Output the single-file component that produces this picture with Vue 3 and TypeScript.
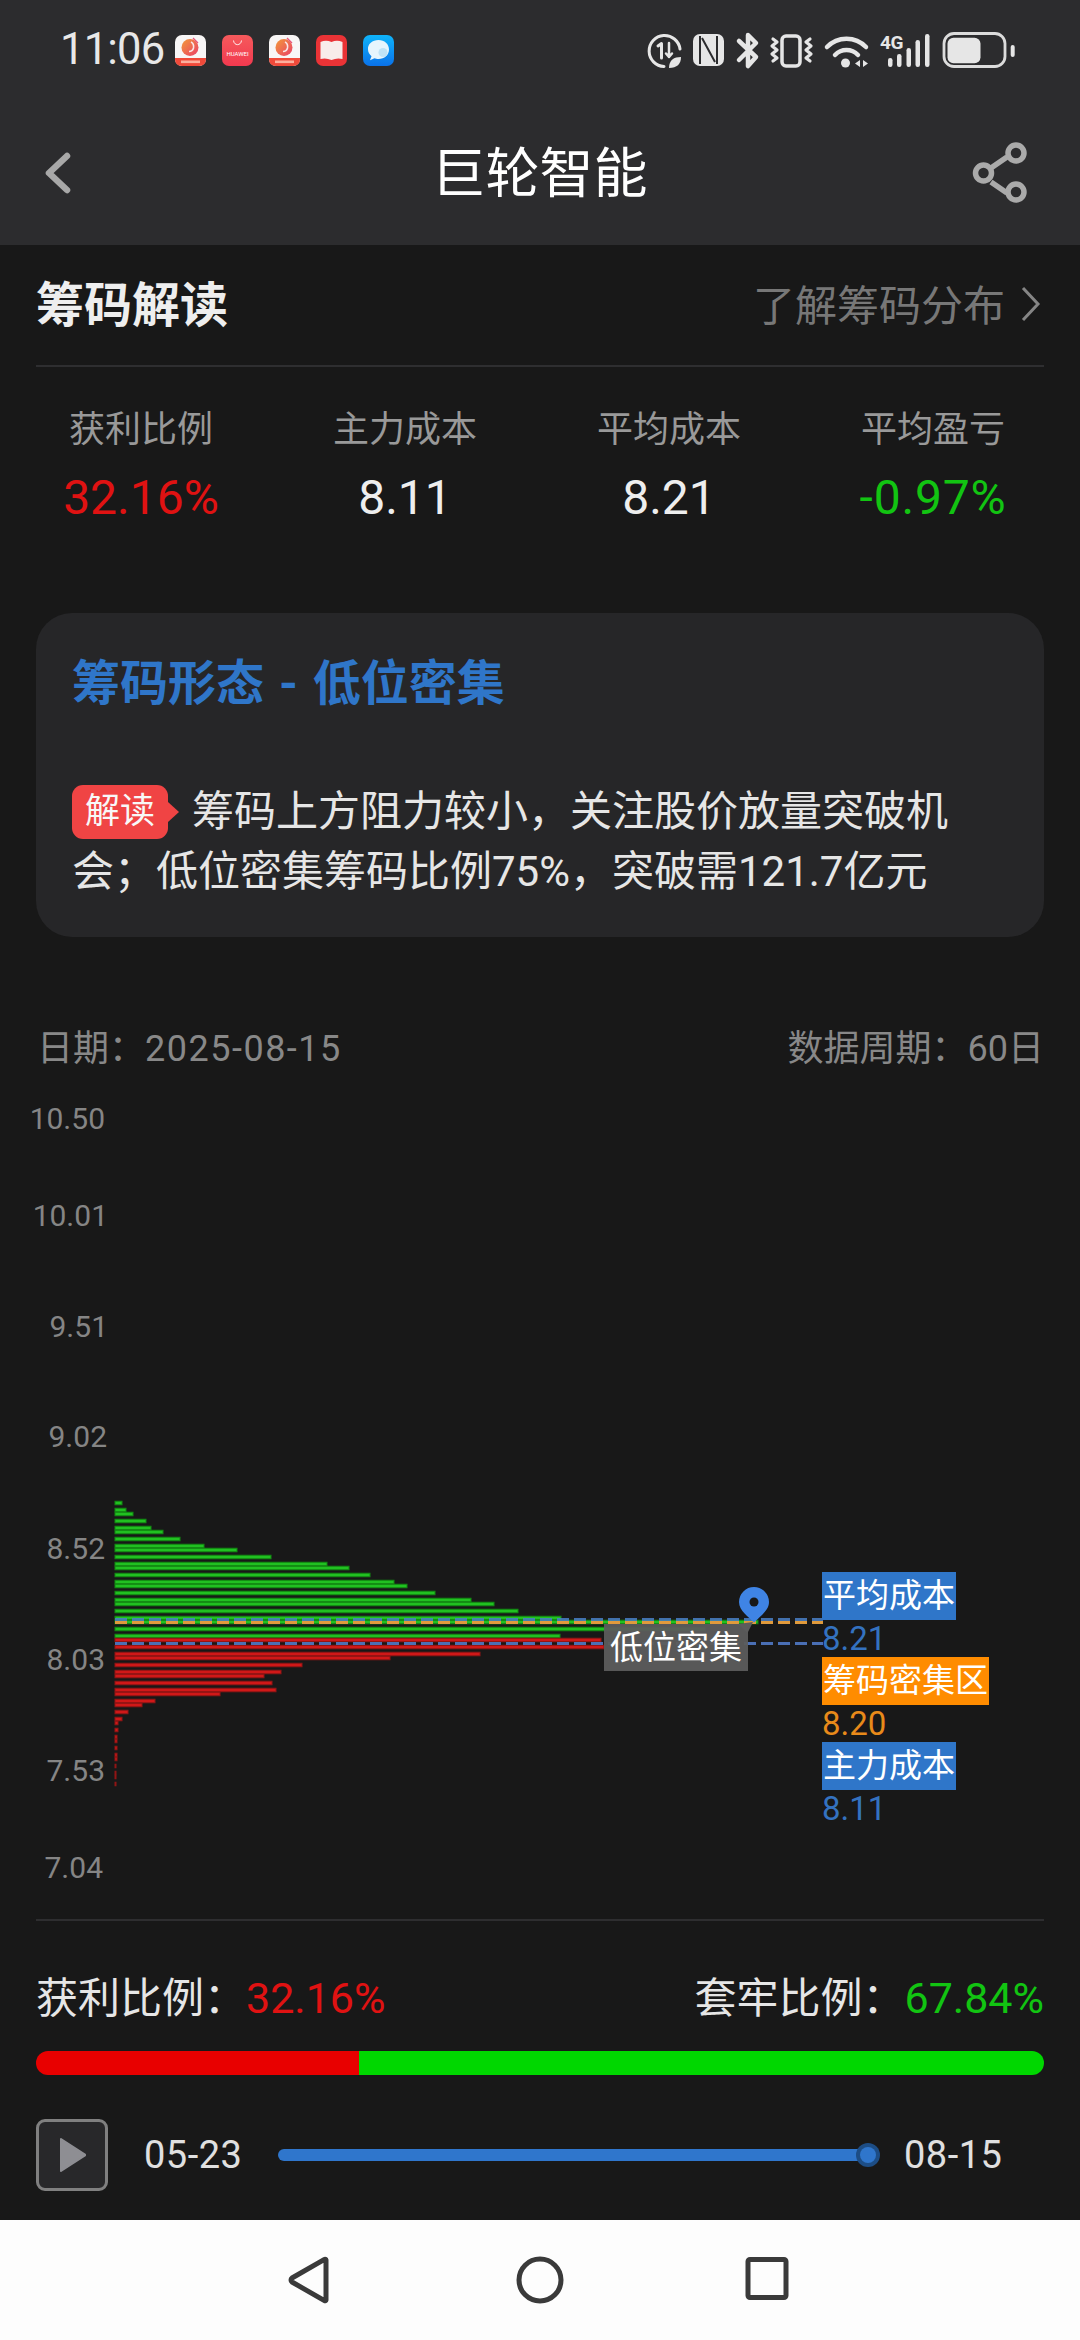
<script setup lang="ts">
const stats = [
  { label: '获利比例', value: '32.16%', tone: 'red' },
  { label: '主力成本', value: '8.11', tone: '' },
  { label: '平均成本', value: '8.21', tone: '' },
  { label: '平均盈亏', value: '-0.97%', tone: 'green' },
]
const axis: { t: string; y: number; r: number }[] = [
  { t: '10.50', y: 1119, r: 975 },
  { t: '10.01', y: 1216, r: 972 },
  { t: '9.51', y: 1327, r: 972 },
  { t: '9.02', y: 1437, r: 973 },
  { t: '8.52', y: 1549, r: 975 },
  { t: '8.03', y: 1660, r: 975 },
  { t: '7.53', y: 1771, r: 975 },
  { t: '7.04', y: 1868, r: 977 },
]
const top = 1080
const green: [number, number][] = [
  [1503, 7], [1510, 11], [1514, 18], [1521, 31], [1528, 36], [1532, 48], [1539, 65], [1546, 89],
  [1550, 122], [1557, 156], [1564, 212], [1568, 234], [1575, 255], [1582, 279], [1586, 292],
  [1593, 320], [1600, 356], [1604, 379], [1611, 403], [1618, 446], [1622, 643], [1629, 590], [1636, 445],
]
const red: [number, number][] = [
  [1640, 486], [1647, 489], [1654, 365], [1658, 275], [1665, 187], [1672, 166], [1676, 149], [1683, 157],
  [1690, 161], [1694, 105], [1701, 40], [1705, 27], [1712, 13], [1719, 7], [1723, 3], [1730, 3],
  [1737, 2], [1741, 2], [1748, 2], [1755, 2], [1759, 2], [1766, 1], [1773, 1], [1777, 1], [1784, 1],
]
const marks = [
  { name: '平均成本', value: '8.21', tone: 'blue' },
  { name: '筹码密集区', value: '8.20', tone: 'orange' },
  { name: '主力成本', value: '8.11', tone: 'blue' },
]
const appIcons = [0, 1, 2, 3, 4]
</script>

<template>
  <div class="page">
    <header class="top">
      <div class="status">
        <span class="time">11:06</span>
        <div class="apps">
          <svg v-for="i in appIcons" :key="i" class="app" viewBox="0 0 31 31" width="31" height="31">
            <defs>
              <linearGradient :id="'ball' + i" x1="0" y1="0" x2="1" y2="1">
                <stop offset="0" stop-color="#f29a3a" />
                <stop offset="1" stop-color="#ea3f68" />
              </linearGradient>
              <linearGradient :id="'hw' + i" x1="0" y1="0" x2="0" y2="1">
                <stop offset="0" stop-color="#f55a5c" />
                <stop offset="1" stop-color="#f2394f" />
              </linearGradient>
              <linearGradient :id="'msg' + i" x1="0" y1="0" x2="0" y2="1">
                <stop offset="0" stop-color="#0fb4fa" />
                <stop offset="1" stop-color="#0a72ea" />
              </linearGradient>
            </defs>
            <g v-if="i === 0 || i === 2">
              <rect width="31" height="31" rx="7" fill="#f8f6f6" />
              <circle cx="15" cy="12.500" r="8.500" :fill="`url(#ball${i})`" />
              <path d="M16 7c2 1 3 3 2.500 6c-.5 2-2 3.500-4.500 3.500" fill="none" stroke="#f8e6e6" stroke-width="1.600" />
              <path d="M18 3l5 5" stroke="#e8557a" stroke-width="1.300" />
              <path d="M0 23h31v1q0 7-7 7H7q-7 0-7-7z" fill="#f04a3a" />
              <rect x="6" y="25.500" width="19" height="2.600" fill="#ffc9b8" opacity=".8" />
            </g>
            <g v-else-if="i === 1">
              <rect width="31" height="31" rx="7" :fill="`url(#hw${i})`" />
              <path d="M11.500 5.500c.5 5.500 7.500 5.500 8 0" fill="none" stroke="#fff" stroke-width=".9" />
              <text x="15.500" y="20.500" class="hw">HUAWEI</text>
            </g>
            <g v-else-if="i === 3">
              <rect width="31" height="31" rx="7" fill="#ea3336" />
              <path d="M4.500 7q5.500-2.500 11 0q5.500-2.500 11 0v17q-5.500-1.500-11 1q-5.500-2.500-11-1z" fill="#f8ecea" />
            </g>
            <g v-else>
              <rect width="31" height="31" rx="7" :fill="`url(#msg${i})`" />
              <path d="M15.500 5c6 0 10.500 4 10.500 9.500s-4.500 9.500-10.500 9.500c-1.500 0-3-.3-4-.8l-4.500 2l1.500-4c-2-1.700-3.500-4-3.500-6.700C4.500 9 9.500 5 15.500 5z" fill="#e6f5fd" />
              <circle cx="20" cy="17.500" r="4.500" fill="#bfe3f6" />
            </g>
          </svg>
        </div>
        <svg class="sys" viewBox="0 0 380 50" width="380" height="50">
          <g fill="none" stroke="#e6e6e6" stroke-linecap="round" stroke-linejoin="round">
            <path d="M40 24A15.500 15.500 0 1 0 24 41.500" stroke-width="3" />
            <path d="M18 21l3.500-2.500V33" stroke-width="3" />
            <path d="M29 18v14M26 28.500l3 3.500l3-3.500" stroke-width="2.500" />
            <path d="M99 16l17 16l-8 9V10l8 8l-17 17" stroke-width="4.500" />
            <rect x="142" y="11" width="18" height="30" rx="4" stroke-width="3.500" />
            <path d="M133 14l4 3l-5 4l5 4l-5 4l5 4l-4 3" stroke-width="3.200" />
            <path d="M170 14l-4 3l5 4l-5 4l5 4l-5 4l4 3" stroke-width="3.200" />
            <path d="M187 22A27 27 0 0 1 226 22" stroke-width="4.500" />
            <path d="M195 30A16 16 0 0 1 218 30" stroke-width="4.500" />
            <rect x="304" y="8.500" width="61" height="33" rx="10" stroke-width="2.800" stroke="#dcdcdc" />
          </g>
          <g fill="#e6e6e6">
            <path d="M29 43C29 35 34 32 41 32C41 39 37 43 29 43Z" />
            <rect x="53" y="9" width="31" height="32" rx="7" />
            <circle cx="205.500" cy="38" r="4.500" />
            <path d="M215 38.500l5-3.500v7zM223 35l5 3.500l-5 3.500z" />
            <text x="240" y="24" class="fourg">4G</text>
            <rect x="248" y="33" width="4.500" height="9" rx="2.200" />
            <rect x="257" y="29" width="4.500" height="13" rx="2.200" />
            <rect x="266.500" y="23" width="4.500" height="19" rx="2.200" />
            <rect x="275.500" y="15" width="4.500" height="27" rx="2.200" />
            <rect x="285" y="9" width="4.500" height="33" rx="2.200" />
            <rect x="307.500" y="12.700" width="33" height="25.500" rx="6" />
            <rect x="370.700" y="20" width="4" height="12" rx="2" />
          </g>
          <path d="M60 11V39M77 11V39M62 13L75 37" fill="none" stroke="#2c2c2e" stroke-width="2" />
        </svg>
      </div>
      <nav class="bar">
        <svg class="back" viewBox="0 0 30 46" width="30" height="46">
          <path d="M25 6L7 23l18 17" fill="none" stroke="#a8a8a8" stroke-width="6.500" stroke-linecap="round" stroke-linejoin="round" />
        </svg>
        <h1 class="title">巨轮智能</h1>
        <svg class="share" viewBox="0 0 60 66" width="60" height="66">
          <g fill="none" stroke="#aaa" stroke-width="5.500">
            <path d="M21 26L37 15M21 40L37 51" />
            <circle cx="46" cy="11" r="8" />
            <circle cx="13.500" cy="31" r="8" />
            <circle cx="46" cy="50" r="8" />
          </g>
        </svg>
      </nav>
    </header>

    <main class="main">
      <div class="head">
        <h2 class="head-title">筹码解读</h2>
        <div class="more">
          <span>了解筹码分布</span>
          <svg viewBox="0 0 20 36" width="20" height="36">
            <path d="M2 2l15 16L2 34" fill="none" stroke="#858585" stroke-width="3" />
          </svg>
        </div>
      </div>

      <div class="stats">
        <div v-for="s in stats" :key="s.label" class="stat">
          <div class="stat-label">{{ s.label }}</div>
          <div class="stat-value" :class="s.tone">{{ s.value }}</div>
        </div>
      </div>

      <section class="card">
        <h3 class="card-title">筹码形态 - 低位密集</h3>
        <p class="card-text"><span class="badge">解读</span>筹码上方阻力较小，关注股价放量突破机会；低位密集筹码比例75%，突破需121.7亿元</p>
      </section>

      <div class="meta">
        <span>日期：<span class="num">2025-08-15</span></span>
        <span>数据周期：60日</span>
      </div>

      <div class="chart">
        <svg class="plot" viewBox="0 0 1080 839" width="1080" height="839">
          <rect
            v-for="b in green"
            :key="'g' + b[0]"
            x="115"
            :y="b[0] - top - 1.75"
            :width="b[1]"
            height="3.500"
            fill="#21c021"
            stroke="#128a12"
            stroke-width="1"
          />
          <rect
            v-for="b in red"
            :key="'r' + b[0]"
            x="115"
            :y="b[0] - top - 1.75"
            :width="b[1]"
            height="3.500"
            fill="#d01818"
            stroke="#921414"
            stroke-width="1"
          />
          <line x1="115" x2="823" y1="539.500" y2="539.500" stroke="#4a80c8" stroke-width="3" stroke-dasharray="12 5" opacity=".85" />
          <line x1="115" x2="823" y1="542.500" y2="542.500" stroke="#e09a3c" stroke-width="3" stroke-dasharray="12 5" />
          <line x1="115" x2="823" y1="563.500" y2="563.500" stroke="#5079c6" stroke-width="3" stroke-dasharray="12 5" opacity=".9" />
          <polygon points="738,544 747.500,553 753,542" fill="#5c5c5c" />
        </svg>

        <span
          v-for="a in axis"
          :key="a.t"
          class="tick"
          :style="{ top: a.y - top - 20 + 'px', right: a.r + 'px' }"
        >{{ a.t }}</span>

        <div class="tag">低位密集</div>

        <svg class="pin" viewBox="0 0 30 36" width="30" height="36">
          <path d="M15 0A15 15 0 0 1 30 15C30 24 20 30 15 35.500C10 30 0 24 0 15A15 15 0 0 1 15 0Z" fill="#3f84e5" />
          <circle cx="15" cy="15" r="4.500" fill="#181818" />
        </svg>

        <div class="marks">
          <div v-for="m in marks" :key="m.name" class="mark">
            <span class="chip" :class="m.tone">{{ m.name }}</span>
            <span class="mark-value" :class="m.tone">{{ m.value }}</span>
          </div>
        </div>
      </div>

      <div class="rule"></div>

      <div class="ratio">
        <span>获利比例：<em class="red">32.16%</em></span>
        <span>套牢比例：<em class="green">67.84%</em></span>
      </div>
      <div class="split">
        <div class="split-red"></div>
        <div class="split-green"></div>
      </div>

      <div class="player">
        <button class="play" type="button" aria-label="播放">
          <svg viewBox="0 0 28 36" width="28" height="36">
            <path d="M2 2L26 17.500V18.500L2 34Z" fill="#8e8e93" stroke="#8e8e93" stroke-width="2" stroke-linejoin="round" />
          </svg>
        </button>
        <span class="day">05-23</span>
        <div class="track"><i class="thumb"></i></div>
        <span class="day end">08-15</span>
      </div>
    </main>

    <footer class="keys">
      <svg viewBox="0 0 60 60" width="60" height="60" class="k">
        <path d="M43 10V50a1 1 0 0 1-1.500.7L9 32a2.500 2.500 0 0 1 0-4L41.500 9.300a1 1 0 0 1 1.500.7Z" fill="none" stroke="#3a3a3a" stroke-width="5" stroke-linejoin="round" />
      </svg>
      <svg viewBox="0 0 60 60" width="60" height="60" class="k">
        <circle cx="30" cy="30" r="21" fill="none" stroke="#3a3a3a" stroke-width="5" />
      </svg>
      <svg viewBox="0 0 60 60" width="60" height="60" class="k k-last">
        <rect x="9" y="9.500" width="38" height="38" rx="2" fill="none" stroke="#3a3a3a" stroke-width="5" />
      </svg>
    </footer>
  </div>
</template>

<style scoped>
.page {
  width: 1080px;
  height: 2340px;
  display: flex;
  flex-direction: column;
  background: #181818;
  font-family: Roboto, "Noto Sans CJK SC", sans-serif;
  overflow: hidden;
}
.top {
  height: 245px;
  flex: none;
  background: #2c2c2e;
}
.status {
  height: 100px;
  display: flex;
  align-items: center;
  padding: 0 60px 0 60px;
}
.time {
  font-size: 43.500px;
  line-height: 50px;
  color: #e8e8e8;
  letter-spacing: -0.8px;
  width: 115px;
  flex: none;
}
.apps {
  display: flex;
  gap: 16px;
}
.app {
  display: block;
}
.hw {
  font-family: Roboto, sans-serif;
  font-size: 6px;
  fill: #fff;
  text-anchor: middle;
}
.sys {
  margin-left: auto;
  display: block;
}
.fourg {
  font-family: Roboto, sans-serif;
  font-size: 19px;
  font-weight: 700;
  letter-spacing: -.5px;
}
.bar {
  height: 145px;
  display: grid;
  grid-template-columns: 1fr auto 1fr;
  align-items: center;
  padding: 0 50px 0 42px;
}
.back,
.share {
  display: block;
}
.share {
  justify-self: end;
  margin-top: 4px;
}
.title {
  margin: 5px 0 0 7px;
  font-size: 54px;
  line-height: 70px;
  font-weight: 400;
  color: #fff;
}
.main {
  flex: 1;
  padding: 0 36px;
  min-height: 0;
}
.head {
  height: 122px;
  box-sizing: border-box;
  border-bottom: 2px solid #2e2e30;
  display: flex;
  align-items: center;
  justify-content: space-between;
}
.head-title {
  margin: 2px 0 0;
  font-size: 48px;
  line-height: 60px;
  font-weight: 700;
  color: #eee;
}
.more {
  display: flex;
  align-items: center;
  gap: 16px;
  font-size: 42px;
  color: #777;
  padding-right: 3px;
}
.more span {
  margin-top: -6px;
}
.more svg {
  display: block;
  margin-top: -2px;
}
.stats {
  display: grid;
  grid-template-columns: repeat(4, 264px);
  margin: 0 -27px;
  padding-top: 38px;
}
.stat {
  text-align: center;
}
.stat-label {
  font-size: 36px;
  line-height: 50px;
  color: #999;
}
.stat-value {
  font-size: 48px;
  line-height: 60px;
  margin-top: 13px;
  color: #eee;
}
.stat-value.red,
.ratio .red {
  color: #e01212;
}
.stat-value.green {
  letter-spacing: .8px;
}
.stat-value.green,
.ratio .green {
  color: #12c412;
}
.card {
  margin-top: 85px;
  height: 324px;
  border-radius: 36px;
  background: #262628;
  padding: 41px 36px 0;
  box-sizing: border-box;
}
.card-title {
  margin: 0;
  font-size: 48px;
  line-height: 60px;
  font-weight: 700;
  color: #2f76c9;
  word-spacing: 3px;
}
.card-text {
  margin: 68px 0 0;
  font-size: 42px;
  line-height: 60px;
  color: #e6e6e6;
}
.badge {
  display: inline-block;
  vertical-align: top;
  position: relative;
  width: 96px;
  height: 54px;
  margin: 3px 24px 0 0;
  border-radius: 11px;
  background: #f04444;
  color: #f8f8f8;
  font-size: 35px;
  line-height: 54px;
  text-align: center;
}
.badge::after {
  content: "";
  position: absolute;
  left: 96px;
  top: 17px;
  border-style: solid;
  border-width: 10px 0 10px 11px;
  border-color: transparent transparent transparent #f04444;
}
.meta {
  margin-top: 85px;
  height: 50px;
  box-sizing: border-box;
  padding: 0 0 4px 1px;
  display: flex;
  justify-content: space-between;
  align-items: center;
  font-size: 36px;
  color: #888;
}
.meta .num {
  letter-spacing: 1.500px;
}
.chart {
  position: relative;
  height: 839px;
  margin: 8px -36px 0;
}
.plot {
  position: absolute;
  left: 0;
  top: 0;
  display: block;
}
.tick {
  position: absolute;
  font-size: 30px;
  line-height: 40px;
  color: #858585;
}
.tag {
  position: absolute;
  left: 604px;
  top: 544px;
  width: 144px;
  height: 47px;
  background: rgba(92, 92, 92, .95);
  color: #fff;
  font-size: 33px;
  line-height: 47px;
  text-align: center;
}
.pin {
  position: absolute;
  left: 739px;
  top: 507px;
  display: block;
}
.marks {
  position: absolute;
  left: 822px;
  top: 492px;
  display: flex;
  flex-direction: column;
  align-items: flex-start;
}
.mark {
  height: 85px;
  display: flex;
  flex-direction: column;
  align-items: flex-start;
}
.chip {
  height: 48px;
  padding: 0 1px;
  font-size: 33px;
  line-height: 48px;
  color: #fff;
}
.chip.blue {
  background: #2f76c9;
}
.chip.orange {
  background: #ff8c00;
}
.mark-value {
  font-size: 33px;
  line-height: 37px;
}
.mark-value.blue {
  color: #3472c0;
}
.mark-value.orange {
  color: #e88a1a;
}
.rule {
  height: 2px;
  background: #2e2e30;
}
.ratio {
  margin-top: 47px;
  display: flex;
  justify-content: space-between;
  font-size: 42px;
  line-height: 60px;
  color: #e6e6e6;
}
.ratio em {
  font-style: normal;
  font-size: 43px;
}
.split {
  margin-top: 22px;
  height: 24px;
  display: flex;
  border-radius: 12px;
  overflow: hidden;
}
.split-red {
  width: 323px;
  background: #e80000;
}
.split-green {
  flex: 1;
  background: #00d700;
}
.player {
  margin-top: 44px;
  height: 72px;
  display: flex;
  align-items: center;
}
.play {
  width: 72px;
  height: 72px;
  flex: none;
  padding: 0 0 0 2px;
  display: flex;
  align-items: center;
  justify-content: center;
  box-sizing: border-box;
  border: 3px solid #808080;
  border-radius: 9px;
  background: #28282a;
}
.play svg {
  display: block;
}
.day {
  margin-left: 36px;
  width: 97px;
  flex: none;
  font-size: 38px;
  letter-spacing: .5px;
  white-space: nowrap;
  color: #e0e0e0;
}
.day.end {
  margin-left: 26px;
}
.track {
  position: relative;
  margin-left: 37px;
  width: 600px;
  height: 12px;
  flex: none;
  border-radius: 6px;
  background: #2f76cc;
}
.thumb {
  position: absolute;
  left: 582px;
  top: -2px;
  width: 16px;
  height: 16px;
  border-radius: 50%;
  background: #2f76cc;
  box-shadow: 0 0 0 4px #1d4d85;
}
.keys {
  height: 120px;
  flex: none;
  display: grid;
  grid-template-columns: repeat(3, 227px);
  justify-content: center;
  justify-items: center;
  align-items: center;
  background: #fdfdfd;
}
.k {
  display: block;
}
.k-last {
  margin-left: 4px;
}
</style>

<style>
html,
body {
  margin: 0;
  background: #181818;
}
</style>
